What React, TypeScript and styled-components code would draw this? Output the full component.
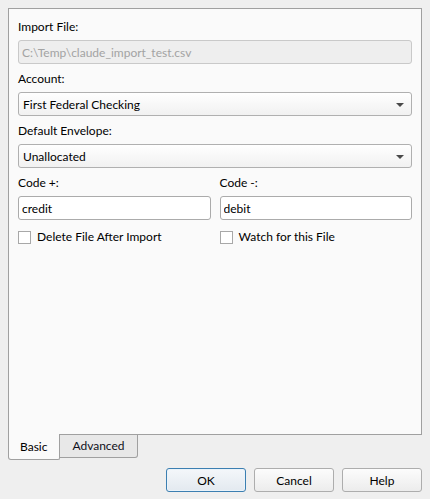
import React, { useState } from "react";
import styled, { createGlobalStyle } from "styled-components";

const GlobalStyle = createGlobalStyle`
   html, body {
      margin: 0;
      padding: 0;
      background: #efefef;
   }
   body {
      font-family: Lato, "Noto Sans", sans-serif;
      font-size: 12px;
      color: #000;
   }
`;

const Dialog = styled.div`
   width: 430px;
   height: 499px;
   box-sizing: border-box;
   padding: 8px 8px 0 8px;
   display: flex;
   flex-direction: column;
`;

const Panel = styled.div`
   height: 427px;
   box-sizing: border-box;
   border: 1px solid #a0a0a0;
   background: #fafafa;
   padding: 10px 9px 0 9px;
   display: flex;
   flex-direction: column;
   gap: 7px;
`;

const Field = styled.div`
   display: flex;
   flex-direction: column;
   gap: 5px;
`;

const Label = styled.label`
   height: 16px;
   line-height: 16px;
   white-space: nowrap;
`;

const TextInput = styled.input`
   height: 24px;
   box-sizing: border-box;
   width: 100%;
   margin: 0;
   padding: 0 3px;
   font: inherit;
   color: #000;
   background: #fff;
   border: 1px solid #ababab;
   border-radius: 3px;
   outline: none;

   &:disabled {
      background: #eeeeee;
      border-color: #c9c9c9;
      color: #a3a3a3;
   }
`;

const SelectBox = styled.div`
   height: 24px;
   box-sizing: border-box;
   display: flex;
   align-items: center;
   justify-content: space-between;
   padding: 0 7px 0 4px;
   border: 1px solid #b0b0b0;
   border-radius: 3px;
   background: linear-gradient(#ffffff, #f1f1f1);
`;

const Arrow = styled.span`
   width: 0;
   height: 0;
   border-left: 4px solid transparent;
   border-right: 4px solid transparent;
   border-top: 4px solid #4a4a4a;
   margin-top: 1px;
`;

const Columns = styled.div`
   display: grid;
   grid-template-columns: 1fr 1fr;
   column-gap: 9px;
`;

const CheckRow = styled.div`
   display: grid;
   grid-template-columns: 1fr 1fr;
   column-gap: 9px;
   margin-top: 2px;
`;

const CheckLabel = styled.label`
   display: flex;
   align-items: center;
   gap: 6px;
   height: 16px;
   line-height: 16px;
   white-space: nowrap;
`;

const Box = styled.span<{ checked?: boolean }>`
   width: 13px;
   height: 13px;
   box-sizing: border-box;
   border: 1px solid #a8a8a8;
   background: #fff;
   display: flex;
   align-items: center;
   justify-content: center;
   font-size: 10px;
`;

const TabBar = styled.div`
   display: flex;
   align-items: flex-start;
   margin-top: -1px;
`;

const Tab = styled.div<{ active?: boolean }>`
   box-sizing: border-box;
   height: ${({ active }) => (active ? "26px" : "24px")};
   padding: ${({ active }) => (active ? "3px 12px 0 11px" : "1px 12px 0 12px")};
   line-height: 20px;
   border: 1px solid #a0a0a0;
   border-top: ${({ active }) => (active ? "none" : "1px solid #a0a0a0")};
   border-left: ${({ active }) => (active ? "1px solid #a0a0a0" : "none")};
   border-radius: ${({ active }) => (active ? "0 0 2px 3px" : "0 0 3px 0")};
   background: ${({ active }) => (active ? "#fafafa" : "#e8e8e8")};
   color: ${({ active }) => (active ? "#000" : "#101020")};
   cursor: default;
`;

const ButtonRow = styled.div`
   display: flex;
   justify-content: flex-end;
   gap: 8px;
   margin-top: 8px;
`;

const Button = styled.button<{ primary?: boolean }>`
   width: 80px;
   height: 24px;
   margin: 0;
   padding: 0;
   font: inherit;
   color: #000;
   border-radius: 3px;
   border: 1px solid ${({ primary }) => (primary ? "#3c7fb1" : "#adadad")};
   background: ${({ primary }) =>
      primary ? "linear-gradient(#f4f7fa, #e3e9ef)" : "linear-gradient(#fcfcfc, #ececec)"};
   box-shadow: ${({ primary }) => (primary ? "inset 0 0 0 1px #eaf3fa" : "none")};
`;

const Check = ({ label }: { label: string }) => {
   const [on, setOn] = useState(false);
   return (
      <CheckLabel onClick={() => setOn(!on)}>
         <Box checked={on}>{on ? "✓" : ""}</Box>
         {label}
      </CheckLabel>
   );
};

const Select = ({ value }: { value: string }) => (
   <SelectBox>
      <span>{value}</span>
      <Arrow />
   </SelectBox>
);

export default function App() {
   const [tab, setTab] = useState("basic");

   return (
      <>
         <GlobalStyle />
         <Dialog>
            <Panel>
               <Field>
                  <Label>Import File:</Label>
                  <TextInput disabled value="C:\Temp\claude_import_test.csv" readOnly />
               </Field>
               <Field>
                  <Label>Account:</Label>
                  <Select value="First Federal Checking" />
               </Field>
               <Field>
                  <Label>Default Envelope:</Label>
                  <Select value="Unallocated" />
               </Field>
               <Columns>
                  <Field>
                     <Label>Code +:</Label>
                     <TextInput defaultValue="credit" />
                  </Field>
                  <Field>
                     <Label>Code -:</Label>
                     <TextInput defaultValue="debit" />
                  </Field>
               </Columns>
               <CheckRow>
                  <Check label="Delete File After Import" />
                  <Check label="Watch for this File" />
               </CheckRow>
            </Panel>
            <TabBar>
               <Tab active={tab === "basic"} onClick={() => setTab("basic")}>
                  Basic
               </Tab>
               <Tab active={tab === "advanced"} onClick={() => setTab("advanced")}>
                  Advanced
               </Tab>
            </TabBar>
            <ButtonRow>
               <Button primary>OK</Button>
               <Button>Cancel</Button>
               <Button>Help</Button>
            </ButtonRow>
         </Dialog>
      </>
   );
}
